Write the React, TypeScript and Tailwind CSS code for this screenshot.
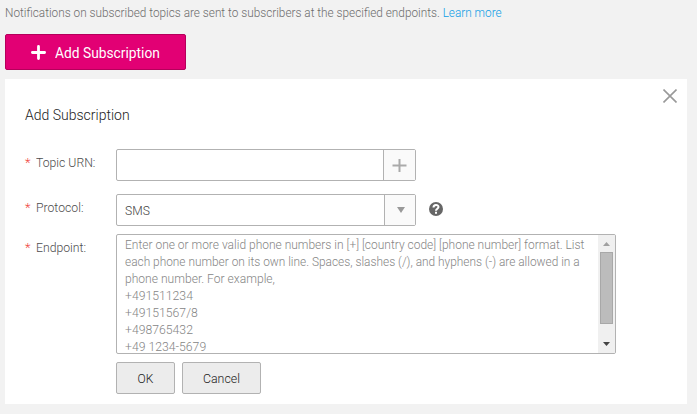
import type { ReactNode } from "react";

function Label({ children, className = "" }: { children: ReactNode; className?: string }) {
  return (
    <div className={`flex w-[91px] shrink-0 leading-4 text-[#4c4c4c] ${className}`}>
      <span className="w-[11px] text-[#f0443c]">*</span>
      <span className="origin-left scale-x-[0.94] whitespace-nowrap">{children}</span>
    </div>
  );
}

function Line({ children, className = "scale-x-[0.94]" }: { children: ReactNode; className?: string }) {
  return <div className={`w-max origin-left whitespace-nowrap ${className}`}>{children}</div>;
}

export default function App() {
  return (
    <div className="h-[414px] w-[697px] overflow-hidden bg-[#f2f2f2] pl-[5px] pt-[5px] font-['Roboto','Liberation_Sans',sans-serif] text-[13px] font-light">
      <div className="h-[29px] leading-4 text-[#6c6c6c]">
        <p className="w-max origin-left scale-x-[0.907] whitespace-nowrap">
          Notifications on subscribed topics are sent to subscribers at the specified endpoints.{" "}
          <a className="text-[#0c9ce6]">Learn more</a>
        </p>
      </div>

      <button className="flex h-9 w-[181px] items-center rounded-[2px] border border-[#b5005b] bg-[#e20074] pl-[25px] text-[14px] font-normal text-white">
        <svg className="mr-[9px] size-[15px]" viewBox="0 0 15 15">
          <path d="M7.5 1.4v12.2M1.4 7.5h12.2" stroke="white" strokeWidth="2.8" strokeLinecap="round" />
        </svg>
        <span className="origin-left scale-x-[0.985] whitespace-nowrap pt-px leading-4">Add Subscription</span>
      </button>

      <section className="mt-[9px] h-[325px] w-[682px] bg-white pl-5">
        <div className="flex h-[70px] justify-between pr-[10px]">
          <h2 className="pt-[28px] text-[14px] leading-4 text-[#222]">Add Subscription</h2>
          <svg className="mt-[10px] size-[14px]" viewBox="0 0 14 14">
            <path d="M.5.5l13 13M13.5.5l-13 13" stroke="#999" strokeWidth="1.6" />
          </svg>
        </div>

        <div className="flex h-[45px]">
          <Label className="pt-[6px]">Topic URN:</Label>
          <div className="flex h-8 w-[300px] rounded-[2px] border border-[#b2b2b2]">
            <div className="flex-1" />
            <div className="flex w-8 items-center justify-center border-l border-[#b2b2b2] bg-[#fafafa]">
              <svg className="size-[15px]" viewBox="0 0 15 15">
                <path d="M7.5 1v13M.5 7.5h14" stroke="#aaa" strokeWidth="2" />
              </svg>
            </div>
          </div>
        </div>

        <div className="flex h-[40px]">
          <Label className="pt-[6px]">Protocol:</Label>
          <div className="flex h-8 w-[300px] rounded-[2px] border border-[#b2b2b2]">
            <div className="flex-1 pl-2 pt-2 leading-4 text-[#444]">
              <Line className="scale-x-[0.93]">SMS</Line>
            </div>
            <div className="flex w-[31px] items-center justify-center border-l border-[#b2b2b2] bg-[#fafafa] pl-px">
              <svg className="h-[6px] w-2" viewBox="0 0 8 6">
                <path d="M0 0h8L4 6z" fill="#999" />
              </svg>
            </div>
          </div>
          <svg className="ml-[13px] mt-2 size-[14px]" viewBox="0 0 14 14">
            <circle cx="7" cy="7" r="7" fill="#666" />
            <path d="M4.5 5.4C4.5 2.3 9.5 2.2 9.5 5.1 9.5 6.7 7 6.8 7 8.7M7 9.8v1.9" fill="none" stroke="white" strokeWidth="2" />
          </svg>
        </div>

        <div className="flex h-[128px]">
          <Label className="pt-[6px]">Endpoint:</Label>
          <div className="flex h-[120px] w-[500px] overflow-hidden rounded-[2px] border border-[#b2b2b2]">
            <div className="min-w-0 flex-1 pl-2 pt-px leading-[17px] text-[#858585]">
              <Line className="scale-x-[0.922]">Enter one or more valid phone numbers in [+] [country code] [phone number] format. List</Line>
              <Line className="scale-x-[0.914]">each phone number on its own line. Spaces, slashes (/), and hyphens (-) are allowed in a</Line>
              <Line className="scale-x-[0.93]">phone number. For example,</Line>
              <Line>+491511234</Line>
              <Line>+49151567/8</Line>
              <Line>+498765432</Line>
              <Line>+49 1234-5679</Line>
            </div>
            <div className="flex w-[17px] flex-col items-center bg-[#f0f0f0]">
              <svg className="mt-[7px] h-1 w-[7px]" viewBox="0 0 7 4">
                <path d="M3.5 0L7 4H0z" fill="#a0a0a0" />
              </svg>
              <div className="mt-[6px] h-[72px] w-[13px] border border-[#a8a8a8] bg-[#bcbcbc]" />
              <svg className="mt-[18px] h-1 w-[7px]" viewBox="0 0 7 4">
                <path d="M0 0h7L3.5 4z" fill="#444" />
              </svg>
            </div>
          </div>
        </div>

        <div className="flex gap-[7px] pl-[91px] text-[#222]">
          <button className="h-8 w-[59px] rounded-[2px] border border-[#b2b2b2] bg-[#ececec] pt-px">
            <span className="inline-block scale-x-[0.93]">OK</span>
          </button>
          <button className="h-8 w-[79px] rounded-[2px] border border-[#b2b2b2] bg-[#ececec] pt-px">
            <span className="inline-block scale-x-[0.95]">Cancel</span>
          </button>
        </div>
      </section>
    </div>
  );
}
